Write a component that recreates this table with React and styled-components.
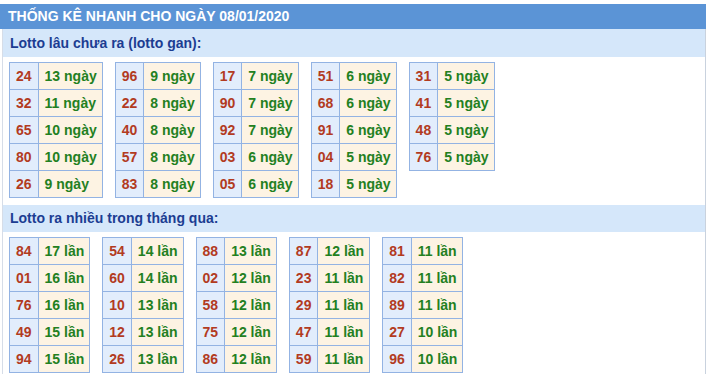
import React from "react";
import styled, { createGlobalStyle } from "styled-components";

const Global = createGlobalStyle`
  html, body { margin: 0; padding: 0; background: #fff; }
  body { font-family: "Liberation Sans", Arial, sans-serif; }
`;

const Wrapper = styled.div`
  width: 706px;
  margin-top: 4px;
`;

const Header = styled.div`
  height: 25px;
  line-height: 25px;
  background: #5b94d6;
  color: #fff;
  font-weight: bold;
  font-size: 14px;
  padding-left: 8px;
  white-space: nowrap;
`;

const Body = styled.div`
  margin-left: 2px;
  border-left: 1px solid #d6dde8;
  border-right: 1px solid #c9d2de;
`;

const SectionTitle = styled.div`
  height: ${(p) => p.$h}px;
  line-height: ${(p) => p.$h}px;
  background: #d5e7fa;
  color: #1c3d92;
  font-weight: bold;
  font-size: 14px;
  padding-left: 7px;
`;

const TableRow = styled.div`
  display: flex;
  align-items: flex-start;
  gap: 12px;
  padding: ${(p) => p.$pt}px 0 ${(p) => p.$pb}px 6px;
`;

const Table = styled.div`
  display: grid;
  grid-template-columns: auto auto;
  border-top: 1px solid #93b3e3;
  border-left: 1px solid #93b3e3;
`;

const Cell = styled.div`
  height: 26px;
  line-height: 26px;
  border-right: 1px solid #93b3e3;
  border-bottom: 1px solid #93b3e3;
  font-size: 14px;
  font-weight: bold;
  white-space: nowrap;
`;

const NumCell = styled(Cell)`
  padding: 0 6px;
  background: #e2edfc;
  color: #b23b1f;
`;

const ValCell = styled(Cell)`
  padding: 0 5px 0 6px;
  background: #fdf3e3;
  color: #23801f;
`;

const gan = [
  [["24", 13], ["32", 11], ["65", 10], ["80", 10], ["26", 9]],
  [["96", 9], ["22", 8], ["40", 8], ["57", 8], ["83", 8]],
  [["17", 7], ["90", 7], ["92", 7], ["03", 6], ["05", 6]],
  [["51", 6], ["68", 6], ["91", 6], ["04", 5], ["18", 5]],
  [["31", 5], ["41", 5], ["48", 5], ["76", 5]],
];

const nhieu = [
  [["84", 17], ["01", 16], ["76", 16], ["49", 15], ["94", 15]],
  [["54", 14], ["60", 14], ["10", 13], ["12", 13], ["26", 13]],
  [["88", 13], ["02", 12], ["58", 12], ["75", 12], ["86", 12]],
  [["87", 12], ["23", 11], ["29", 11], ["47", 11], ["59", 11]],
  [["81", 11], ["82", 11], ["89", 11], ["27", 10], ["96", 10]],
];

function StatTable({ rows, unit }) {
  return (
    <Table>
      {rows.map(([n, v]) => (
        <React.Fragment key={n}>
          <NumCell>{n}</NumCell>
          <ValCell>
            {v} {unit}
          </ValCell>
        </React.Fragment>
      ))}
    </Table>
  );
}

export default function App() {
  return (
    <>
      <Global />
      <Wrapper>
        <Header>THỐNG KÊ NHANH CHO NGÀY 08/01/2020</Header>
        <Body>
          <SectionTitle $h={28}>Lotto lâu chưa ra (lotto gan):</SectionTitle>
          <TableRow $pt={5} $pb={7}>
            {gan.map((t, i) => (
              <StatTable key={i} rows={t} unit="ngày" />
            ))}
          </TableRow>
          <SectionTitle $h={27}>Lotto ra nhiều trong tháng qua:</SectionTitle>
          <TableRow $pt={5} $pb={6}>
            {nhieu.map((t, i) => (
              <StatTable key={i} rows={t} unit="lần" />
            ))}
          </TableRow>
        </Body>
      </Wrapper>
    </>
  );
}
